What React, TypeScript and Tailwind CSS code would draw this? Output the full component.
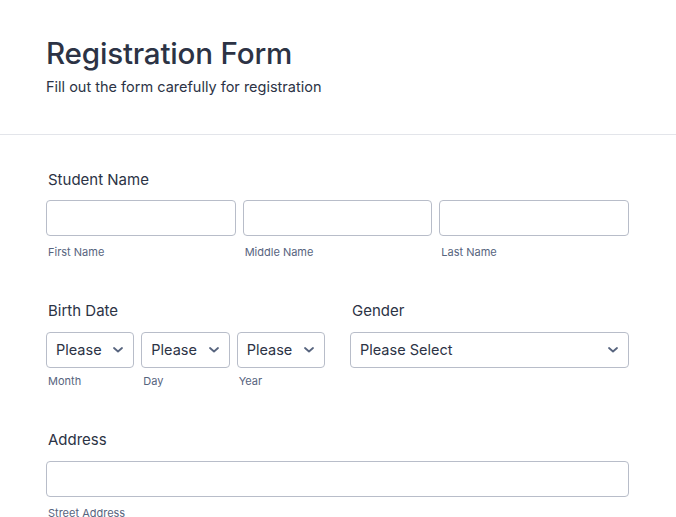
function TextBox({ sub }: { sub: string }) {
  return (
    <div className="flex flex-col">
      <div className="h-[36px] rounded-[4px] border border-[#b8bdc9] bg-white" />
      <span className="mt-[9px] pl-[2px] text-[11px] leading-[14px] text-[#57647e]">{sub}</span>
    </div>
  );
}

function Chevron() {
  return (
    <svg width="10" height="6" viewBox="0 0 10 6" fill="none" className="shrink-0">
      <path d="M1 1l4 3.5L9 1" stroke="#57647e" strokeWidth="1.8" strokeLinecap="round" strokeLinejoin="round" />
    </svg>
  );
}

function SelectBox({ text, sub, narrow }: { text: string; sub?: string; narrow?: boolean }) {
  return (
    <div className="flex flex-col">
      <div className="flex h-[36px] items-center rounded-[4px] border border-[#b8bdc9] bg-white pl-[9px] pr-[10px]">
        <span
          className={`overflow-hidden whitespace-nowrap text-[14.5px] text-[#2c3345] ${narrow ? "w-[48px]" : "flex-1"}`}
        >
          {text}
        </span>
        <span className="flex-1" />
        <Chevron />
      </div>
      {sub && <span className="mt-[6px] pl-[2px] text-[11px] leading-[14px] text-[#57647e]">{sub}</span>}
    </div>
  );
}

export default function App() {
  return (
    <div className="min-h-screen bg-white font-['Inter',sans-serif] text-[#2c3345]">
      <header className="border-b border-[#e3e5ea] pl-[46px] pb-[38px] pt-[35px]">
        <h1 className="text-[29.6px] font-medium leading-[36px] tracking-[-0.2px]">Registration Form</h1>
        <p className="mt-[7px] text-[14.5px] leading-[18px]">Fill out the form carefully for registration</p>
      </header>

      <main className="ml-[46px] w-[583px] pt-[36px]">
        <section>
          <label className="block pl-[2px] text-[15px] leading-[18px]">Student Name</label>
          <div className="mt-[11px] grid grid-cols-3 gap-[7px]">
            <TextBox sub="First Name" />
            <TextBox sub="Middle Name" />
            <TextBox sub="Last Name" />
          </div>
        </section>

        <section className="mt-[43px] flex gap-[25px]">
          <div className="w-[279px]">
            <label className="block pl-[2px] text-[15px] leading-[18px]">Birth Date</label>
            <div className="mt-[12px] grid grid-cols-3 gap-[7px]">
              <SelectBox text="Please Select" sub="Month" narrow />
              <SelectBox text="Please Select" sub="Day" narrow />
              <SelectBox text="Please Select" sub="Year" narrow />
            </div>
          </div>
          <div className="flex-1">
            <label className="block pl-[2px] text-[15px] leading-[18px]">Gender</label>
            <div className="mt-[12px]">
              <SelectBox text="Please Select" />
            </div>
          </div>
        </section>

        <section className="mt-[43px]">
          <label className="block pl-[2px] text-[15px] leading-[18px]">Address</label>
          <div className="mt-[12px]">
            <TextBox sub="Street Address" />
          </div>
        </section>
      </main>
    </div>
  );
}
